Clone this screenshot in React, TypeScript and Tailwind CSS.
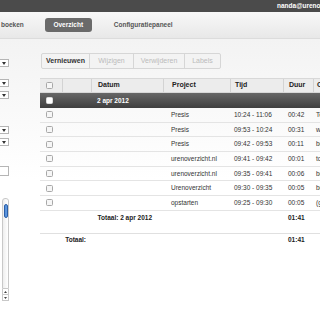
import React from 'react';

const rows = [
  { project: 'Presis', tijd: '10:24 - 11:06', duur: '00:42', oms: 'Testen' },
  { project: 'Presis', tijd: '09:53 - 10:24', duur: '00:31', oms: 'werk aan offerte' },
  { project: 'Presis', tijd: '09:42 - 09:53', duur: '00:11', oms: 'bespreking' },
  { project: 'urenoverzicht.nl', tijd: '09:41 - 09:42', duur: '00:01', oms: 'todo lijst' },
  { project: 'urenoverzicht.nl', tijd: '09:35 - 09:41', duur: '00:06', oms: 'bellen' },
  { project: 'Urenoverzicht', tijd: '09:30 - 09:35', duur: '00:05', oms: 'bezoek' },
  { project: 'opstarten', tijd: '09:25 - 09:30', duur: '00:05', oms: '(geen omschrijving)' },
];

const cols = 'grid grid-cols-[22px_29px_72px_67px_53px_30px_1fr]';

function Check({ light }: { light?: boolean }) {
  return (
    <span
      className={
        'block w-[7px] h-[7px] rounded-[1.5px] border ' +
        (light ? 'bg-white border-[#ddd]' : 'bg-[#f6f6f6] border-[#a8a8a8]')
      }
    />
  );
}

function MiniSelect({ top }: { top: string }) {
  return (
    <div className={'w-[9px] h-[8px] bg-white border border-l-0 border-[#b5b5b5] flex items-center justify-center ' + top}>
      <svg width="4" height="3" viewBox="0 0 4 3">
        <path d="M0 0H4L2 3Z" fill="#333" />
      </svg>
    </div>
  );
}

function Sidebar() {
  return (
    <div className="w-[40px] shrink-0 flex flex-col">
      <MiniSelect top="mt-[20px]" />
      <MiniSelect top="mt-[12px]" />
      <MiniSelect top="mt-[4px]" />
      <MiniSelect top="mt-[27px]" />
      <MiniSelect top="mt-[4px]" />
      <div className="mt-[20px] w-[9px] h-[10px] bg-white border border-l-0 border-[#b5b5b5]" />
      <div className="mt-[22px] ml-[2px] w-[7px] flex flex-col">
        <div className="h-[91px] border border-[#c8c8c8] rounded-t-[3px] bg-gradient-to-r from-[#eee] to-white pt-[5px]">
          <div className="h-[14px] mx-[0.5px] rounded-full bg-gradient-to-r from-[#2f6fc4] via-[#7fb2ee] to-[#3a7bd0] border border-[#2a5fa8]" />
        </div>
        <div className="h-[6px] border border-t-0 border-[#c8c8c8] bg-white flex items-center justify-center">
          <svg width="3" height="2" viewBox="0 0 3 2"><path d="M0 2H3L1.5 0Z" fill="#444" /></svg>
        </div>
        <div className="h-[6px] border border-t-0 border-[#c8c8c8] bg-white flex items-center justify-center">
          <svg width="3" height="2" viewBox="0 0 3 2"><path d="M0 0H3L1.5 2Z" fill="#444" /></svg>
        </div>
      </div>
    </div>
  );
}

function Toolbar() {
  return (
    <div className="mt-[14px] ml-[1px] flex h-[16px] w-[180px] rounded-[2px] border border-[#d6d6d6] bg-[#f3f3f3] text-[7px]">
      <div className="w-[48px] flex items-center justify-center font-bold text-[#333] border-r border-[#d6d6d6]">Vernieuwen</div>
      <div className="w-[44px] flex items-center justify-center text-[#bbb] border-r border-[#d6d6d6]">Wijzigen</div>
      <div className="w-[51px] flex items-center justify-center text-[#bbb] border-r border-[#d6d6d6]">Verwijderen</div>
      <div className="flex-1 flex items-center justify-center text-[#bbb]">Labels</div>
    </div>
  );
}

function Table() {
  const line = 'border-l border-[#d3d3d3]';
  return (
    <div className="mt-[9px] text-[6.5px] text-[#333]">
      <div className={cols + ' h-[15px] bg-[#ececec] border-y border-[#d8d8d8] font-bold text-[7px] text-[#222] items-stretch'}>
        <div className="flex items-center pl-[6px]"><Check /></div>
        <div className={line} />
        <div className={line + ' flex items-center pl-[6px]'}>Datum</div>
        <div className={line + ' flex items-center pl-[8px]'}>Project</div>
        <div className={line + ' flex items-center pl-[4px]'}>Tijd</div>
        <div className={line + ' flex items-center pl-[5px]'}>Duur</div>
        <div className={line + ' flex items-center pl-[3px] whitespace-nowrap'}>Omschrijving</div>
      </div>
      <div className={cols + ' h-[15px] bg-gradient-to-b from-[#676767] to-[#3f3f3f] text-white font-bold items-center'}>
        <div className="pl-[6px]"><Check light /></div>
        <div />
        <div className="pl-[6px]">2 apr 2012</div>
      </div>
      {rows.map((r, i) => (
        <div key={i} className={cols + ' h-[14.7px] border-b border-[#e4e4e4] items-center whitespace-nowrap'}>
          <div className="pl-[6px]"><Check /></div>
          <div />
          <div />
          <div className="pl-[8px]">{r.project}</div>
          <div className="pl-[4px]">{r.tijd}</div>
          <div className="pl-[5px]">{r.duur}</div>
          <div className="pl-[3px] overflow-hidden">{r.oms}</div>
        </div>
      ))}
      <div className={cols + ' h-[23px] border-b border-[#e0e0e0] font-bold text-[#222] items-start pt-[2px]'}>
        <div className="col-span-3 text-right pr-[11px]">Totaal: 2 apr 2012</div>
        <div />
        <div />
        <div className="pl-[5px]">01:41</div>
      </div>
      <div className={cols + ' h-[13px] font-bold text-[#222] items-center'}>
        <div className="col-span-2 text-right pr-[5px]">Totaal:</div>
        <div />
        <div />
        <div />
        <div className="pl-[5px]">01:41</div>
      </div>
    </div>
  );
}

export default function App() {
  return (
    <div className="w-[320px] h-[320px] overflow-hidden bg-white flex flex-col" style={{ fontFamily: '"Liberation Sans", Arial, sans-serif' }}>
      <div className="h-[12px] shrink-0 bg-[#4b4b4b] flex items-center pl-[277px] overflow-hidden whitespace-nowrap">
        <span className="text-[6.5px] font-bold text-white">nanda@urenoverzicht.nl</span>
      </div>
      <div className="h-[27px] shrink-0 bg-gradient-to-b from-[#f8f8f8] to-[#e8e8e8] border-b border-[#dcdcdc] flex items-center text-[6.5px] font-bold text-[#555] whitespace-nowrap">
        <span className="ml-[1px]">boeken</span>
        <span className="ml-[21px] w-[47px] h-[14px] rounded-[3px] bg-[#6a6a6a] text-white flex items-center justify-center">Overzicht</span>
        <span className="ml-[22px]">Configuratiepaneel</span>
      </div>
      <div className="flex-1 flex bg-gradient-to-b from-[#f3f3f3] via-white to-white">
        <Sidebar />
        <div className="flex-1 overflow-hidden">
          <Toolbar />
          <Table />
        </div>
      </div>
    </div>
  );
}
